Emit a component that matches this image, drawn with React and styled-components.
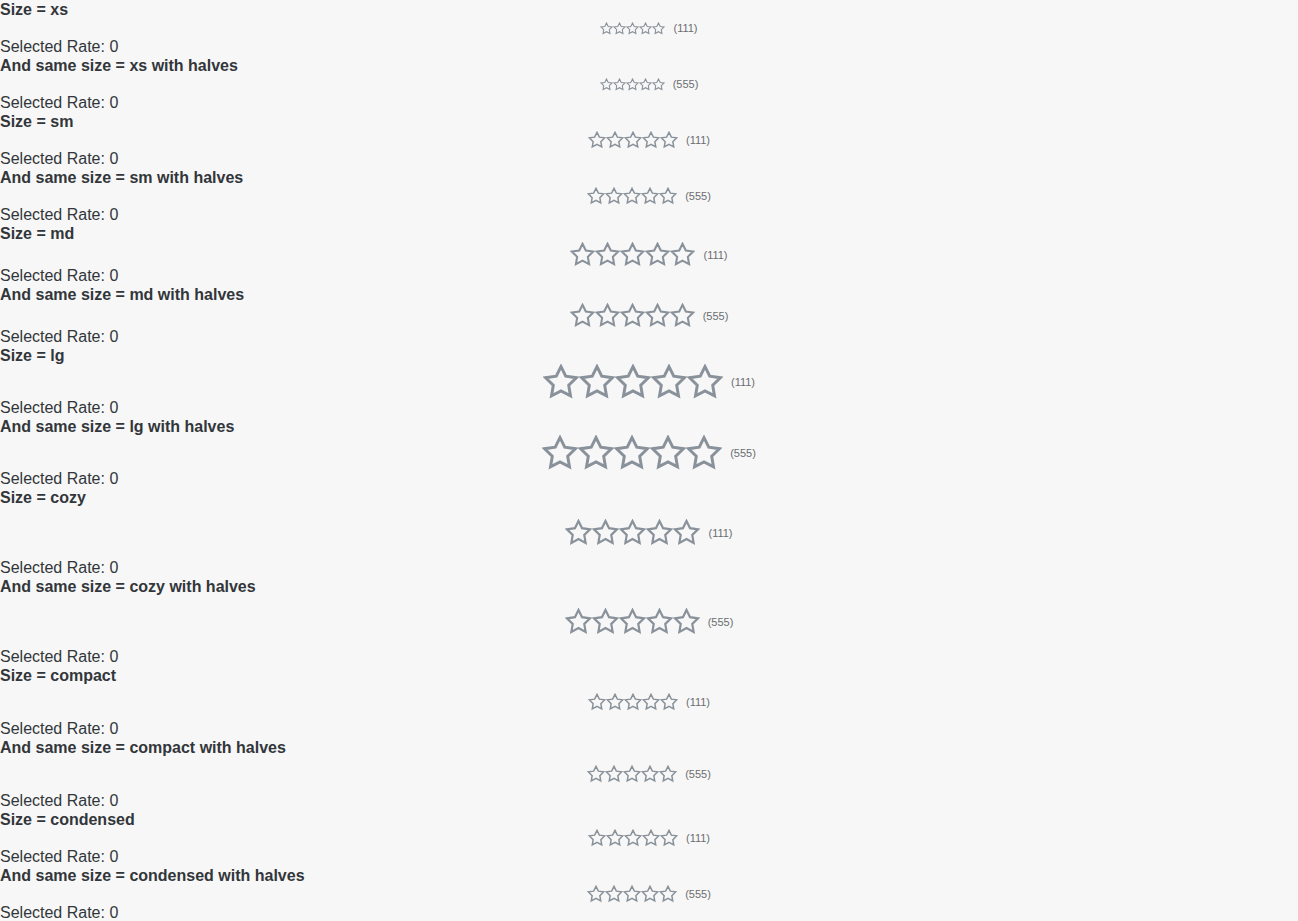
import styled, { createGlobalStyle } from "styled-components";

const GlobalStyle = createGlobalStyle`
    body {
        margin: 0;
        background: #f7f7f7;
        font-family: "Liberation Sans", Arial, sans-serif;
        color: #32363a;
    }
`

const sizes = [
    { name: 'xs', pitch: 13, row: 18 },
    { name: 'sm', pitch: 18, row: 18 },
    { name: 'md', pitch: 25, row: 23 },
    { name: 'lg', pitch: 36, row: 33 },
    { name: 'cozy', pitch: 27, row: 51 },
    { name: 'compact', pitch: 18, row: 34 },
    { name: 'condensed', pitch: 18, row: 18 },
];

function Star({ size }) {
    return (
        <svg width={size} height={size} viewBox="1 1 22 22">
            <polygon
                points="12,2.6 14.9,8.5 21.4,9.4 16.7,14 17.8,20.5 12,17.4 6.2,20.5 7.3,14 2.6,9.4 9.1,8.5"
                fill="none"
                stroke="#89919a"
                strokeWidth="1.8"
                strokeLinejoin="miter"
            />
        </svg>
    );
}

function Rating({ pitch, row, count }) {
    return (
        <RatingRow $h={row}>
            <Stars>
                {[0, 1, 2, 3, 4].map(i => <Star key={i} size={pitch} />)}
            </Stars>
            <Count>({count})</Count>
        </RatingRow>
    );
}

export default function App() {
    return (
        <Page>
            <GlobalStyle />
            {sizes.map(s => (
                <div key={s.name}>
                    <Block>
                        <Title>Size = {s.name}</Title>
                        <Rating pitch={s.pitch} row={s.row} count={111} />
                        <Selected>Selected Rate: 0</Selected>
                    </Block>
                    <Block>
                        <Title>And same size = {s.name} with halves</Title>
                        <Rating pitch={s.pitch} row={s.row} count={555} />
                        <Selected>Selected Rate: 0</Selected>
                    </Block>
                </div>
            ))}
        </Page>
    );
}

const Page = styled.div`
    display: flex;
    flex-direction: column;
`

const Block = styled.div`
    display: flex;
    flex-direction: column;
`

const Title = styled.div`
    font-size: 16px;
    font-weight: bold;
    line-height: 19px;
`

const Selected = styled.div`
    font-size: 16px;
    line-height: 19px;
`

const RatingRow = styled.div`
    height: ${p => p.$h}px;
    display: flex;
    align-items: center;
    justify-content: center;
    gap: 8px;
`

const Stars = styled.div`
    display: flex;
    align-items: center;

    svg {
        display: block;
    }
`

const Count = styled.span`
    font-size: 11px;
    color: #6a6d70;
`
